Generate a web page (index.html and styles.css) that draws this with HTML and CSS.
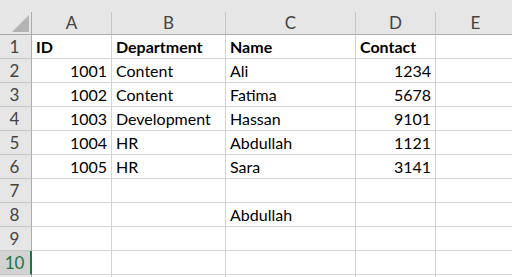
FILE: index.html
```
<!DOCTYPE html>
<html lang="en">
<head>
    <meta charset="UTF-8">
    <title>Sheet1</title>
    <link rel="stylesheet" href="styles.css">
</head>
<body>
<div class="sheet">
    <!-- top strip -->
    <div class="top_strip"></div>

    <div class="grid">
        <!-- column headers -->
        <div class="corner"><span class="corner_tri"></span></div>
        <div class="col_head">A</div>
        <div class="col_head">B</div>
        <div class="col_head">C</div>
        <div class="col_head">D</div>
        <div class="col_head">E</div>

        <div class="row_head">1</div>
        <div class="cell bold">ID</div>
        <div class="cell bold">Department</div>
        <div class="cell bold">Name</div>
        <div class="cell bold">Contact</div>
        <div class="cell"></div>

        <div class="row_head">2</div>
        <div class="cell num">1001</div>
        <div class="cell">Content</div>
        <div class="cell">Ali</div>
        <div class="cell num">1234</div>
        <div class="cell"></div>

        <div class="row_head">3</div>
        <div class="cell num">1002</div>
        <div class="cell">Content</div>
        <div class="cell">Fatima</div>
        <div class="cell num">5678</div>
        <div class="cell"></div>

        <div class="row_head">4</div>
        <div class="cell num">1003</div>
        <div class="cell">Development</div>
        <div class="cell">Hassan</div>
        <div class="cell num">9101</div>
        <div class="cell"></div>

        <div class="row_head">5</div>
        <div class="cell num">1004</div>
        <div class="cell">HR</div>
        <div class="cell">Abdullah</div>
        <div class="cell num">1121</div>
        <div class="cell"></div>

        <div class="row_head">6</div>
        <div class="cell num">1005</div>
        <div class="cell">HR</div>
        <div class="cell">Sara</div>
        <div class="cell num">3141</div>
        <div class="cell"></div>

        <div class="row_head">7</div>
        <div class="cell"></div>
        <div class="cell"></div>
        <div class="cell"></div>
        <div class="cell"></div>
        <div class="cell"></div>

        <div class="row_head">8</div>
        <div class="cell"></div>
        <div class="cell"></div>
        <div class="cell">Abdullah</div>
        <div class="cell"></div>
        <div class="cell"></div>

        <div class="row_head">9</div>
        <div class="cell"></div>
        <div class="cell"></div>
        <div class="cell"></div>
        <div class="cell"></div>
        <div class="cell"></div>

        <div class="row_head selected">10</div>
        <div class="cell"></div>
        <div class="cell"></div>
        <div class="cell"></div>
        <div class="cell"></div>
        <div class="cell"></div>

        <!-- 下一行只露出一点 -->
        <div class="row_head"></div>
        <div class="cell"></div>
        <div class="cell"></div>
        <div class="cell"></div>
        <div class="cell"></div>
        <div class="cell"></div>
    </div>
</div>
</body>
</html>
```
FILE: styles.css
```
*{
    padding: 0;
    margin: 0;
    box-sizing: border-box;
}
body{
    width: 512px;
    height: 277px;
    overflow: hidden;
    background: #fff;
    font-family: Lato, "Liberation Sans", sans-serif;
    font-size: 16px;
    color: #000;
}
.sheet{
    width: 516px;
}
.top_strip{
    height: 12px;
    background: #e6e6e6;
}
.grid{
    display: grid;
    grid-template-columns: 32px 80px 114px 130px 80px 80px;
    grid-template-rows: 23px repeat(11, 24px);
}

/* 表头 */
.corner{
    background: #e6e6e6;
    border-right: 1px solid #ababab;
    border-bottom: 1px solid #ababab;
    display: flex;
    align-items: flex-end;
    justify-content: flex-end;
    padding: 0 2px 2px 0;
}
.corner_tri{
    width: 17px;
    height: 17px;
    background: #b4b4b4;
    clip-path: polygon(100% 0, 100% 100%, 0 100%);
}
.col_head{
    background: #e6e6e6;
    border-right: 1px solid #c6c6c6;
    border-bottom: 1px solid #ababab;
    color: #444;
    text-align: center;
    line-height: 22px;
    font-size: 17px;
}
.row_head{
    background: #e6e6e6;
    border-right: 1px solid #ababab;
    border-bottom: 1px solid #c6c6c6;
    color: #444;
    text-align: center;
    line-height: 24px;
    font-size: 17px;
    padding-right: 2px;
}
.row_head.selected{
    background: #d2d2d2;
    color: #217346;
    border-right: 2px solid #217346;
    padding-right: 1px;
}

/* 单元格 */
.cell{
    border-right: 1px solid #d4d4d4;
    border-bottom: 1px solid #d4d4d4;
    display: flex;
    align-items: flex-end;
    padding: 0 4px 1px 4px;
    white-space: nowrap;
    line-height: 20px;
}
.num{
    justify-content: flex-end;
}
.bold{
    font-weight: bold;
}
```
